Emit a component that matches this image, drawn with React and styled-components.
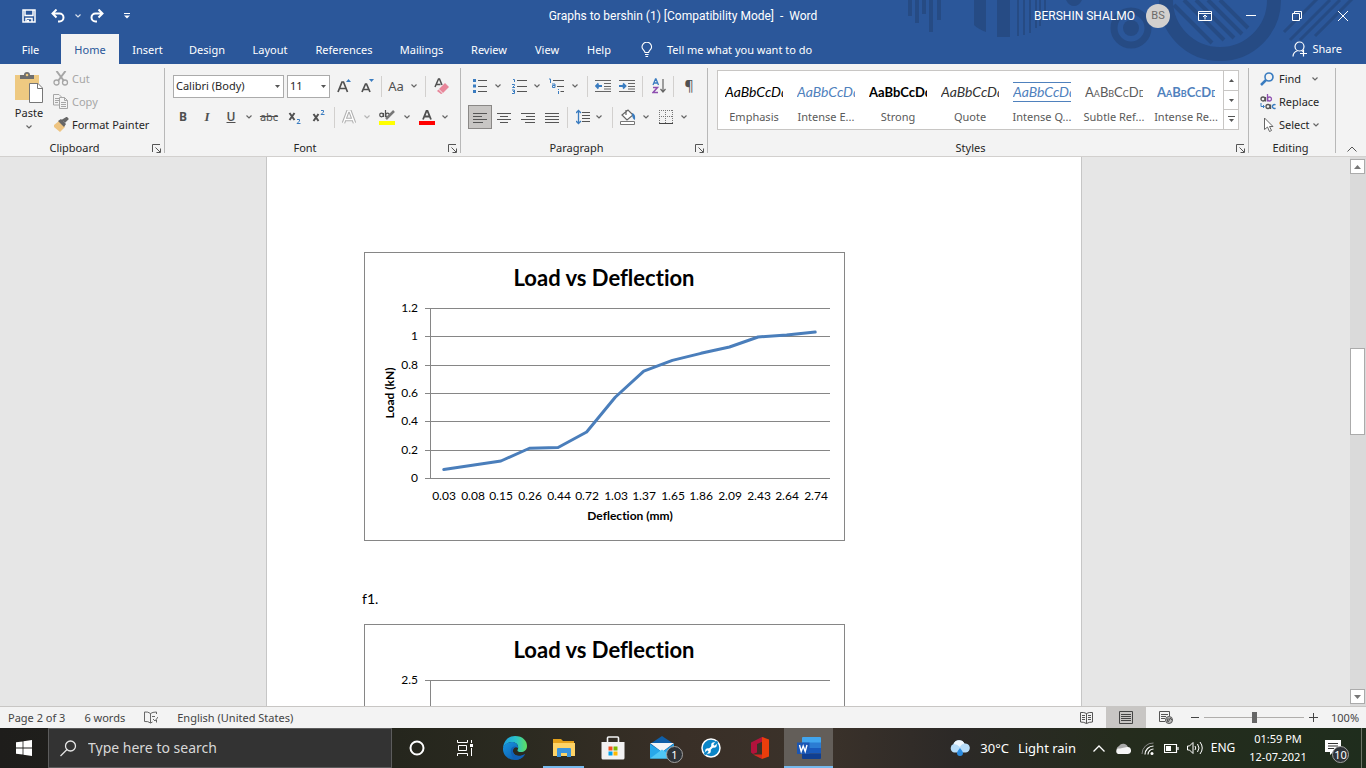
import React from "react";
import styled, { createGlobalStyle } from "styled-components";

const Global = createGlobalStyle`
  *, *::before, *::after { box-sizing: border-box; }
  body { margin: 0; }
  button, select, input { font: inherit; color: inherit; margin: 0; }
  button { padding: 0; border: 0; background: none; cursor: default; }
  svg { display: block; flex: none; }
`;

const ui = `"Noto Sans", "Open Sans", sans-serif`;
const body = `Lato, "Liberation Sans", sans-serif`;
const blue = "#2b579a";

const Window = styled.div`
  display: flex;
  flex-direction: column;
  height: 100vh;
  overflow: hidden;
  background: #e6e6e6;
  color: #262626;
  font: 11px/16px ${ui};
`;

/* ---------- title bar and tabs ---------- */

const Header = styled.header`
  position: relative;
  background: ${blue};
  color: #fff;
`;
const Art = styled.svg`
  position: absolute;
  top: 0;
  right: 0;
`;
const TitleRow = styled.div`
  position: relative;
  display: grid;
  grid-template-columns: 1fr auto 1fr;
  align-items: center;
  height: 32px;
`;
const QuickAccess = styled.div`
  display: flex;
  align-items: center;
  padding-left: 17px;
`;
const Title = styled.h1`
  margin: 0;
  font: 12px/16px Roboto, ${ui};
  white-space: pre;
`;
const Account = styled.div`
  display: flex;
  align-items: center;
  justify-content: flex-end;
  font: 12px/16px Roboto, ${ui};
`;
const Avatar = styled.span`
  width: 24px;
  height: 24px;
  margin: 0 12px 0 11px;
  border-radius: 50%;
  background: #d2d0ce;
  color: #6a6a6a;
  font-size: 11px;
  line-height: 24px;
  text-align: center;
`;
const TabRow = styled.nav`
  position: relative;
  display: flex;
  align-items: flex-end;
  height: 32px;
`;
const Tab = styled.button`
  width: ${(p) => p.$w}px;
  height: 30px;
  padding-top: 2px;
  line-height: 28px;
  color: ${(p) => (p.$active ? blue : "#fff")};
  background: ${(p) => (p.$active ? "#f3f3f3" : "transparent")};
`;
const TellMe = styled.button`
  display: flex;
  align-items: center;
  gap: 14px;
  height: 30px;
  padding: 1px 0 0 16px;
`;
const Share = styled.button`
  display: flex;
  align-items: center;
  gap: 4px;
  height: 30px;
  margin-left: auto;
  padding-right: 24px;
`;

/* ---------- ribbon ---------- */

const Ribbon = styled.section`
  display: flex;
  height: 93px;
  padding-top: 4px;
  background: #f3f3f3;
  border-bottom: 1px solid #d2d0ce;
`;
const GroupBox = styled.div`
  display: flex;
  flex-direction: column;
  width: ${(p) => (p.$w ? p.$w + "px" : "auto")};
  flex: ${(p) => (p.$w ? "none" : "1")};
  height: 85px;
  border-right: 1px solid #b8b8b8;
`;
const GroupBody = styled.div`
  flex: 1;
  padding: ${(p) => p.$pad};
`;
const GroupFoot = styled.div`
  display: flex;
  align-items: center;
  gap: 3px;
  height: 10px;
  padding-right: 3px;
  text-align: center;
`;
const GroupName = styled.span`
  flex: 1;
`;
const Row = styled.div`
  display: flex;
  align-items: center;
  height: 24px;
  margin: 0 0 ${(p) => p.$mb || 0}px ${(p) => p.$ml || 0}px;
`;
const Tool = styled.button`
  display: flex;
  align-items: center;
  justify-content: center;
  flex: none;
  width: ${(p) => p.$w || 24}px;
  height: ${(p) => p.$h || 24}px;
  color: #505050;
  font: ${(p) => p.$font || `12px/16px ${ui}`};
  background: ${(p) => (p.$on ? "#c8c6c4" : "transparent")};
  border: ${(p) => (p.$on ? "1px solid #8a8886" : "0")};
`;
const Rule = styled.span`
  width: 1px;
  height: 21px;
  margin: 0 ${(p) => p.$r}px 0 ${(p) => p.$l}px;
  background: #d2d0ce;
`;
const Command = styled.button`
  display: flex;
  align-items: center;
  gap: 3px;
  height: 23px;
  padding-bottom: 2px;
  color: ${(p) => (p.disabled ? "#a6a6a6" : "#262626")};
  white-space: nowrap;
`;
const Clipboard = styled.div`
  display: flex;
  gap: 9px;
`;
const Paste = styled.button`
  display: flex;
  flex-direction: column;
  align-items: center;
  gap: 2px;
  width: 30px;
  height: 70px;
  padding-top: 4px;
`;
const Combo = styled.div`
  position: relative;
  width: ${(p) => p.$w}px;
  height: 23px;
  margin-right: 3px;
  svg { position: absolute; right: 4px; top: 10px; pointer-events: none; }
  select {
    width: 100%;
    height: 100%;
    padding: 0 2px;
    appearance: none;
    background: #fff;
    border: 1px solid #ababab;
    border-radius: 0;
    color: #262626;
    font-size: 11px;
  }
`;
const Gallery = styled.div`
  display: flex;
  height: 60px;
  background: #fff;
  border: 1px solid #c8c6c4;
`;
const StyleList = styled.div`
  display: flex;
  flex: 1;
`;
const StyleItem = styled.button`
  display: flex;
  flex-direction: column;
  align-items: center;
  width: 72px;
  padding-top: 11px;
  color: #5a5a5a;
`;
const Preview = styled.span`
  width: 58px;
  height: 20px;
  margin-bottom: 7px;
  overflow: hidden;
  text-align: left;
  white-space: nowrap;
  font-family: ${body};
  font-size: ${(p) => (p.$bold || p.$caps ? 13 : 14)}px;
  line-height: 18px;
  font-style: ${(p) => (p.$italic ? "italic" : "normal")};
  font-weight: ${(p) => (p.$bold ? 700 : 400)};
  font-variant: ${(p) => (p.$caps ? "small-caps" : "normal")};
  color: ${(p) => p.$color};
  border: solid ${(p) => (p.$lines ? p.$color : "transparent")};
  border-width: 1px 0;
`;
const Scrolls = styled.div`
  display: flex;
  flex-direction: column;
  width: 15px;
  border-left: 1px solid #c8c6c4;
  button {
    display: flex;
    align-items: center;
    justify-content: center;
    flex: 1;
    width: 14px;
  }
  button + button { border-top: 1px solid #c8c6c4; }
`;
const Collapse = styled.button`
  align-self: flex-end;
  display: flex;
  justify-content: center;
  width: 30px;
  padding: 0 0 4px 2px;
`;

/* ---------- document ---------- */

const Workspace = styled.main`
  display: flex;
  flex: 1;
  min-height: 0;
`;
const Canvas = styled.div`
  display: flex;
  justify-content: center;
  flex: 1;
  padding-right: 2px;
  overflow: hidden;
`;
const Page = styled.article`
  flex: none;
  width: 816px;
  padding: 95px 95px 0;
  background: #fff;
  border: solid #c6c6c6;
  border-width: 0 1px;
  color: #000;
`;
const Figure = styled.figure`
  margin: 0 0 0 2px;
  width: 481px;
  border: 1px solid #868686;
`;
const Para = styled.p`
  margin: 48px 0 15px;
  font: 14px/20px ${body};
`;
const ChartText = styled.text`
  font-family: ${body};
  font-size: ${(p) => p.$size || 12}px;
  font-weight: ${(p) => (p.$bold ? 700 : 400)};
  font-variant-ligatures: none;
  text-anchor: ${(p) => p.$anchor || "middle"};
`;
const ScrollTrack = styled.div`
  display: flex;
  flex-direction: column;
  width: 16px;
  padding: 2px 1px 2px 0;
  background: #dadada;
`;
const ScrollButton = styled.button`
  display: flex;
  align-items: center;
  justify-content: center;
  height: 15px;
  background: #fff;
  border: 1px solid #ababab;
`;
const ScrollThumb = styled.div`
  height: 87px;
  background: #fff;
  border: 1px solid #ababab;
`;
const Space = styled.div`
  flex: ${(p) => p.$n};
`;

/* ---------- status bar ---------- */

const StatusBar = styled.footer`
  display: flex;
  align-items: center;
  justify-content: space-between;
  height: 22px;
  padding: 0 8px;
  background: #f3f3f3;
  border-top: 1px solid #c8c6c4;
  color: #444;
`;
const StatusSide = styled.div`
  display: flex;
  align-items: center;
  height: 21px;
  gap: ${(p) => p.$gap || 0}px;
`;
const ViewButton = styled.button`
  display: flex;
  align-items: center;
  justify-content: center;
  width: 40px;
  height: 21px;
  background: ${(p) => (p.$on ? "#c8c6c4" : "transparent")};
`;
const ZoomRange = styled.input`
  appearance: none;
  width: 100px;
  height: 11px;
  background: linear-gradient(#b0aeac, #b0aeac) center / 100% 1px no-repeat;
  &::-webkit-slider-thumb {
    appearance: none;
    width: 5px;
    height: 11px;
    background: #666;
  }
`;
const Percent = styled.span`
  width: 36px;
  padding-left: 9px;
`;

/* ---------- taskbar ---------- */

const Taskbar = styled.footer`
  display: flex;
  height: 40px;
  color: #fff;
  background: linear-gradient(90deg, #1e1d1b 0, #25261d 29%, #2b2a20 38%, #392f27 50%, #3b322a 60%, #2c2927 70%, #252c1d 82%, #1f2d1d 100%);
`;
const Start = styled.button`
  display: flex;
  align-items: center;
  justify-content: center;
  width: 48px;
`;
const Search = styled.label`
  display: flex;
  align-items: center;
  gap: 11px;
  width: 344px;
  padding-left: 11px;
  background: #333;
  border: 1px solid #5c5c5c;
  input {
    flex: 1;
    min-width: 0;
    padding: 0;
    border: 0;
    outline: 0;
    background: none;
    font-size: 14px;
    &::placeholder { color: #d8d8d8; opacity: 1; }
  }
`;
const TaskButton = styled.button`
  position: relative;
  display: flex;
  align-items: center;
  justify-content: center;
  width: 49px;
  height: 40px;
  background: ${(p) => (p.$active ? "#635e59" : "transparent")};
  &::after {
    content: "";
    position: absolute;
    bottom: 0;
    left: ${(p) => (p.$active ? 0 : 4)}px;
    right: ${(p) => (p.$active ? 0 : 4)}px;
    height: 2px;
    background: ${(p) => (p.$open ? "#76b9ed" : "transparent")};
  }
`;
const Tray = styled.div`
  display: flex;
  align-items: center;
  margin-left: auto;
`;
const Weather = styled.button`
  display: flex;
  align-items: center;
  gap: 9px;
  margin-right: 11px;
  font-size: 13px;
`;
const TrayButton = styled.button`
  display: flex;
  align-items: center;
  justify-content: center;
  width: ${(p) => p.$w || 24}px;
  height: 40px;
  font-size: 12px;
`;
const Clock = styled.time`
  width: 78px;
  font-size: 11px;
  line-height: 18px;
  text-align: center;
`;
const Notify = styled.button`
  position: relative;
  display: flex;
  align-items: center;
  justify-content: center;
  width: 44px;
  height: 40px;
  padding: 0 12px 2px 0;
`;
const Count = styled.span`
  position: absolute;
  right: ${(p) => p.$r}px;
  bottom: 5px;
  width: 17px;
  height: 17px;
  border-radius: 50%;
  border: 1px solid #a0a0a0;
  background: #2f3338;
  font-size: 11px;
  line-height: 15px;
  text-align: center;
`;
const Desktop = styled.button`
  width: 5px;
  height: 40px;
  border-left: 1px solid #6d7568;
`;

/* ---------- icons ---------- */

const Icon = ({ w = 16, h = 16, children, ...rest }) => (
  <svg width={w} height={h} viewBox={`0 0 ${w} ${h}`} fill="none" aria-hidden="true" {...rest}>
    {children}
  </svg>
);
const Chevron = ({ c = "#666" }) => (
  <Icon w={6} h={4}><path d="M.5.5 3 3 5.500.5" stroke={c} strokeWidth="1.200" /></Icon>
);
const Triangle = ({ up, c = "#555", w = 5, h = 3 }) => (
  <Icon w={w} h={h}><path d={up ? `M0 ${h}H${w}L${w / 2} 0Z` : `M0 0H${w}L${w / 2} ${h}Z`} fill={c} /></Icon>
);
const Launcher = () => (
  <Icon w={9} h={9}>
    <path d="M.5 8V.5H8M3.500 3.500 8 8M8.500 4.500V8.500H4.500" stroke="#555" />
  </Icon>
);
const Lines = ({ rows }) => (
  <Icon w={14} h={11}>
    {rows.map(([a, b], i) => (
      <path key={i} d={`M${a} ${i * 3 + 1.5}H${b}`} stroke="#555" />
    ))}
  </Icon>
);
const DropTool = ({ w = 12, c, label }) => (
  <Tool $w={w} aria-label={label}><Chevron c={c} /></Tool>
);

const HeaderArt = () => (
  <Art width="466" height="64" viewBox="0 0 466 64" aria-hidden="true">
    <g fill="#264b84">
      <path d="M8 0h4v16H8zM15 0h4v23h-4zM22 0h4v14h-4zM29 0h4v32h-4zM37 0h4v20h-4z" />
      <path d="M74 0h12v32q-8-3-12-7zM97 0h13v37H97zM117 0h2v36h-2zM123 0h2v35h-2zM129 0h2v33h-2zM135 0h2v28h-2zM139 0h2v26h-2zM144 0h2v15h-2z" />
      <path d="M166 0h16q-3 6-8 6t-8-6z" />
      <circle cx="231" cy="28" r="8" />
    </g>
    <g fill="none" stroke="#264b84">
      <circle cx="231" cy="28" r="17" strokeWidth="7" />
      <circle cx="320" cy="0" r="54" strokeWidth="14" />
      <path d="m274 5 38 38M284 0l40 40M296 0l38 38M308 0l34 34M320 0l28 28" strokeWidth="4" />
      <path d="m390 40 40-40M400 40l40-40M415 36l38-38M384 32l34-34" strokeWidth="3" />
    </g>
  </Art>
);

/* ---------- chart ---------- */

function Chart({ title, ticks, top, step, points = [], xTitle, yTitle }) {
  const left = 65;
  const right = 465;
  const cat = 400 / 14;
  const base = 225;
  const max = ticks[0];
  const x = (i) => left + cat * (i + 0.5);
  const y = (v) => base - (v / max) * (base - top);
  return (
    <Figure>
      <svg width="479" height="287" viewBox="0 0 479 287" role="img" aria-label={title}>
        <ChartText x="239" y="33" $size={22} $bold>{title}</ChartText>
        <g stroke="#868686" shapeRendering="crispEdges">
          {ticks.map((t, i) => (
            <path key={t} d={`M${left - 5} ${Math.round(top + i * step) + 0.5}H${right}`} />
          ))}
          <path d={`M${left + 0.5} ${top}V${base}`} />
        </g>
        {ticks.map((t, i) => (
          <ChartText key={t} x="53" y={Math.round(top + i * step) + 4} $anchor="end">{t}</ChartText>
        ))}
        {points.length > 0 && (
          <polyline
            points={points.map((p, i) => `${x(i) - 0.5},${y(p[1])}`).join(" ")}
            fill="none" stroke="#4a7ebb" strokeWidth="3" strokeLinejoin="round" strokeLinecap="round"
          />
        )}
        {points.map((p, i) => (
          <ChartText key={p[0]} x={Math.round(x(i))} y="247">{p[0]}</ChartText>
        ))}
        {xTitle && <ChartText x="265" y="267" $bold>{xTitle}</ChartText>}
        {yTitle && <ChartText transform="translate(29 140) rotate(-90)" $bold>{yTitle}</ChartText>}
      </svg>
    </Figure>
  );
}

const loads = [
  ["0.03", 0.06], ["0.08", 0.09], ["0.15", 0.12], ["0.26", 0.21], ["0.44", 0.215],
  ["0.72", 0.325], ["1.03", 0.57], ["1.37", 0.755], ["1.65", 0.83], ["1.86", 0.88],
  ["2.09", 0.925], ["2.43", 0.995], ["2.64", 1.01], ["2.74", 1.03],
];

const tabs = [
  ["File", 61], ["Home", 58, true], ["Insert", 57], ["Design", 62], ["Layout", 64],
  ["References", 84], ["Mailings", 71], ["Review", 64], ["View", 52], ["Help", 52],
];

const styles = [
  { name: "Emphasis", color: "#000", italic: true },
  { name: "Intense E...", color: "#4f81bd", italic: true },
  { name: "Strong", color: "#000", bold: true },
  { name: "Quote", color: "#333", italic: true },
  { name: "Intense Q...", color: "#4f81bd", italic: true, lines: true },
  { name: "Subtle Ref...", color: "#5a5a5a", caps: true },
  { name: "Intense Re...", color: "#4f81bd", caps: true, bold: true },
];

function Group({ name, w, pad, launch = true, children }) {
  return (
    <GroupBox $w={w}>
      <GroupBody $pad={pad}>{children}</GroupBody>
      <GroupFoot>
        <GroupName>{name}</GroupName>
        {launch && <button aria-label={`${name} settings`}><Launcher /></button>}
      </GroupFoot>
    </GroupBox>
  );
}

export default function App() {
  return (
    <Window>
      <Global />
      <Header>
        <HeaderArt />
        <TitleRow>
          <QuickAccess>
            <Tool aria-label="Save">
              <Icon w={14} h={14}>
                <path d="M1 1h12v12H1zM3 1v5.500h8V1M4 13v-3.500h6V13" stroke="#fff" strokeWidth="1.500" />
                <path d="M5 11h2v2H5z" fill="#fff" />
              </Icon>
            </Tool>
            <Tool $w={34} aria-label="Undo">
              <Icon w={14} h={14}>
                <path d="M5.500.5 1.500 4.500l4 4M2 4.500h6.500a4 4 0 0 1 0 8H7" stroke="#fff" strokeWidth="2" />
              </Icon>
            </Tool>
            <DropTool w={6} c="#d6deea" label="Undo list" />
            <Tool $w={32} aria-label="Redo">
              <Icon w={14} h={14}>
                <path d="m8.500.5 4 4-4 4M12 4.500H5.500a4 4 0 0 0 0 8H7" stroke="#fff" strokeWidth="2" />
              </Icon>
            </Tool>
            <Tool $w={28} aria-label="Customise">
              <Icon w={6} h={6}><path d="M0 .5h6" stroke="#fff" /><path d="M0 2.500h6L3 5.500z" fill="#fff" /></Icon>
            </Tool>
          </QuickAccess>
          <Title>{"Graphs to bershin (1) [Compatibility Mode]  -  Word"}</Title>
          <Account>
            <span>BERSHIN SHALMO</span>
            <Avatar>BS</Avatar>
            <Tool $w={46} aria-label="Ribbon display options">
              <Icon w={14} h={12}>
                <path d="M.5 1.500h13v9H.5zM.5 3.500h13M7 9.500V5.500M5 7l2-2 2 2" stroke="#fff" />
              </Icon>
            </Tool>
            <Tool $w={46} aria-label="Minimise"><Icon w={10} h={2}><path d="M0 .5h10" stroke="#fff" /></Icon></Tool>
            <Tool $w={46} aria-label="Restore">
              <Icon w={10} h={10}><path d="M.5 2.500h7v7h-7zM2.500 2.500v-2h7v7h-2" stroke="#fff" /></Icon>
            </Tool>
            <Tool $w={46} aria-label="Close"><Icon w={10} h={10}><path d="m0 0 10 10M10 0 0 10" stroke="#fff" /></Icon></Tool>
          </Account>
        </TitleRow>
        <TabRow>
          {tabs.map(([name, w, active]) => <Tab key={name} $w={w} $active={active}>{name}</Tab>)}
          <TellMe>
            <Icon w={12} h={15}>
              <path d="M4 10.500c0-2-3-3-3-5.500a4.800 4.800 0 0 1 9.600 0c0 2.500-3 3.500-3 5.500zM4 12.500h3.600M4.500 14.500h2.600" stroke="#fff" strokeWidth="1.100" />
            </Icon>
            Tell me what you want to do
          </TellMe>
          <Share>
            <Icon w={16} h={16}>
              <circle cx="7.500" cy="5.500" r="4.500" stroke="#fff" strokeWidth="1.200" />
              <path d="M1 15.500c0-3 2-5 4.500-5.800M9.500 9.500l1.500 1M11.500 8.500v7M8 12.500h7" stroke="#fff" strokeWidth="1.200" />
            </Icon>
            Share
          </Share>
        </TabRow>
      </Header>

      <Ribbon>
        <Group name="Clipboard" w={165} pad="0 0 0 14px">
          <Clipboard>
            <Paste>
              <Icon w={28} h={31}>
                <path d="M0 3h24v25H0z" fill="#eec981" />
                <path d="M5 3h4a3 3 0 0 1 6 0h4v4H5z" fill="#6e6e6e" />
                <circle cx="12" cy="3" r="1.300" fill="#eec981" />
                <path d="M14.500 11.500H23l4.500 4.500v14.500h-13z" fill="#fff" stroke="#777" />
                <path d="M22.500 11.500v5h5" stroke="#777" />
              </Icon>
              <span>Paste</span>
              <Tool $w={10} $h={8} as="span"><Chevron /></Tool>
            </Paste>
            <div>
              <Command disabled>
                <Icon w={16} h={15}>
                  <path d="M3.500 0 11 10M12.500 0 5 10" stroke="#a6a6a6" strokeWidth="2" />
                  <circle cx="3.500" cy="11.500" r="2.500" stroke="#a6a6a6" strokeWidth="1.300" />
                  <circle cx="12" cy="11.500" r="2.500" stroke="#a6a6a6" strokeWidth="1.300" />
                </Icon>
                Cut
              </Command>
              <Command disabled>
                <Icon w={16} h={15}>
                  <path d="M.5.5H6l2.500 2.500v8H.5zM2 4.500h4M2 6.500h4M2 8.500h3" stroke="#a6a6a6" />
                  <path d="M6.500 3.500h5l3 3v8h-8z" fill="#f3f3f3" stroke="#a6a6a6" />
                  <path d="M11.500 3.500v3h3M8 8.500h5M8 10.500h5M8 12.500h5" stroke="#a6a6a6" />
                </Icon>
                Copy
              </Command>
              <Command>
                <Icon w={16} h={15}>
                  <path d="m1 8 5-4 6 6-5 5-6-5z" fill="#eec481" />
                  <path d="m5 4 3-2 5 5-2 3z" fill="#666" />
                  <path d="m9 4 5-3M11 5l4-4" stroke="#666" strokeWidth="2.500" />
                </Icon>
                Format Painter
              </Command>
            </div>
          </Clipboard>
        </Group>

        <Group name="Font" w={296} pad="6px 0 0 6px">
          <Row $mb={7} $ml={2}>
            <Combo $w={111}>
              <select aria-label="Font"><option>Calibri (Body)</option></select>
              <Triangle />
            </Combo>
            <Combo $w={43}>
              <select aria-label="Font size"><option>11</option></select>
              <Triangle />
            </Combo>
            <Tool aria-label="Grow font" $w={22}>
              <Icon w={14} h={16}>
                <path d="M1 14 5 4h1.500l4 10M2.500 10.500h6.500" stroke="#505050" strokeWidth="1.700" />
                <path d="M9 4h5l-2.500-3z" fill="#3a7cc0" />
              </Icon>
            </Tool>
            <Tool aria-label="Shrink font">
              <Icon w={14} h={16}>
                <path d="M2 14 5.500 6h1L10 14M3.500 11.500h5" stroke="#505050" strokeWidth="1.700" />
                <path d="M9 1h5l-2.500 3z" fill="#3a7cc0" />
              </Icon>
            </Tool>
            <Rule $l={2} $r={2} />
            <Tool aria-label="Change case" $font={`13px/16px ${ui}`}>Aa</Tool>
            <DropTool label="Case options" />
            <Rule $l={5} $r={5} />
            <Tool aria-label="Clear formatting" $w={22}>
              <Icon w={16} h={16}>
                <path d="M1 9 4.500 1h1L8 7M2.500 6.500h4" stroke="#505050" strokeWidth="1.500" />
                <path d="m5 11 6-6 4 4-6 6z" fill="#e8869a" />
                <path d="m3 13 1.500-1.500 4 4L7 16z" fill="#e8869a" />
              </Icon>
            </Tool>
          </Row>
          <Row>
            <Tool $font={`700 12px/16px ${ui}`}>B</Tool>
            <Tool $font={`italic 700 13px/16px "Liberation Serif", serif`}>I</Tool>
            <Tool $font={`600 12px/16px ${ui}`}><u>U</u></Tool>
            <DropTool label="Underline styles" />
            <Tool $w={28} $font={`11px/16px ${ui}`}><s>abc</s></Tool>
            <Tool aria-label="Subscript">
              <Icon w={14} h={14}>
                <path d="m1.500 3 5 7M6.500 3l-5 7" stroke="#505050" strokeWidth="2" />
                <path d="M9 9.500h2.500v1.500L9 13.500h3.500" stroke="#3a7cc0" />
              </Icon>
            </Tool>
            <Tool aria-label="Superscript">
              <Icon w={14} h={14}>
                <path d="m1.500 4 5 7M6.500 4l-5 7" stroke="#505050" strokeWidth="2" />
                <path d="M9 .5h2.500V2L9 4.500h3.500" stroke="#3a7cc0" />
              </Icon>
            </Tool>
            <Rule $l={3} $r={2} />
            <Tool aria-label="Text effects">
              <Icon w={14} h={14}>
                <path d="M1.500 13 6 1h2l4.500 12M3.500 9.500h7" stroke="#b0b0b0" strokeWidth="3.500" />
                <path d="M1.500 13 6 1h2l4.500 12M3.500 9.500h7" stroke="#fff" strokeWidth="1.300" />
              </Icon>
            </Tool>
            <DropTool c="#b5b5b5" label="Effects list" />
            <Tool $w={28} aria-label="Highlight">
              <Icon w={16} h={16}>
                <circle cx="2.500" cy="6" r="1.800" stroke="#505050" strokeWidth="1.200" />
                <path d="M4.500 4v4M6.500 1v7" stroke="#505050" strokeWidth="1.200" />
                <circle cx="8.500" cy="6" r="1.800" stroke="#505050" strokeWidth="1.200" />
                <path d="m15 2-8 8" stroke="#777" strokeWidth="2.500" />
                <path d="M0 12h16v4H0z" fill="#ff0" />
              </Icon>
            </Tool>
            <DropTool label="Highlight colors" />
            <Tool $w={28} aria-label="Font color">
              <Icon w={16} h={16}>
                <path d="M4 10.500 7.500 2h1l3.500 8.500M5 7.500h6" stroke="#505050" strokeWidth="1.800" />
                <path d="M0 12h16v4H0z" fill="#f00" />
              </Icon>
            </Tool>
            <DropTool w={8} label="Font colors" />
          </Row>
        </Group>

        <Group name="Paragraph" w={247} pad="6px 0 0 7px">
          <Row $mb={7}>
            <Tool aria-label="Bullets">
              <Icon w={14} h={14}>
                <path d="M0 0h3v3H0zM0 5.500h3v3H0zM0 11h3v3H0z" fill="#3a7cc0" />
                <path d="M5 1.500h9M5 7.500h9M5 12.500h9" stroke="#555" />
              </Icon>
            </Tool>
            <DropTool label="Bullet styles" />
            <Tool $w={30} aria-label="Numbering">
              <Icon w={15} h={16}>
                <path d="M1 1.500h1.500V4M0 6.500h2.500v1L.5 9.500H3M0 12h2.500v3.500H0M1 13.500h1" stroke="#3a7cc0" />
                <path d="M5 2.500h10M5 8.500h10M5 13.500h10" stroke="#555" />
              </Icon>
            </Tool>
            <Tool $w={6} aria-label="Number styles"><Chevron /></Tool>
            <Tool $w={31} aria-label="Multilevel list">
              <Icon w={16} h={16}>
                <path d="M1 1h1.500v4M4 6h3v3.500H4.500V7.500H7M10.500 11v1M10.500 13v3" stroke="#3a7cc0" />
                <path d="M5 2.500h11M9 8.500h7M12.500 13.500H16" stroke="#555" />
              </Icon>
            </Tool>
            <DropTool w={8} label="List levels" />
            <Rule $l={8} $r={3} />
            {[true, false].map((out) => (
              <Tool key={String(out)} aria-label={out ? "Decrease indent" : "Increase indent"}>
                <Icon w={16} h={12}>
                  <path d="M0 .5h16M9 3.500h7M9 6.500h7M9 9h7M0 11.500h16" stroke="#666" />
                  <path d={out ? "M7 6H1M3.500 3.500 1 6l2.500 2.500" : "M0 6h6M4 3.500 6.500 6 4 8.500"} stroke="#3a7cc0" strokeWidth="1.800" />
                </Icon>
              </Tool>
            ))}
            <Rule $l={3} $r={4} />
            <Tool aria-label="Sort">
              <Icon w={14} h={16}>
                <path d="M1 7 3.500 1h.5l2.500 6M2 5h4" stroke="#3a7cc0" strokeWidth="1.300" />
                <path d="M1 9.500h4.500L1 14.500h5" stroke="#8e4fb0" strokeWidth="1.500" />
                <path d="M11 1v13M8.500 11l2.500 3 2.500-3" stroke="#666" strokeWidth="1.200" />
              </Icon>
            </Tool>
            <Rule $l={2} $r={3} />
            <Tool $font={`14px/16px ${ui}`}>¶</Tool>
          </Row>
          <Row>
            <Tool $on aria-label="Align left"><Lines rows={[[0, 14], [0, 9], [0, 14], [0, 10]]} /></Tool>
            <Tool aria-label="Centre"><Lines rows={[[0, 14], [3, 11], [0, 14], [3, 11]]} /></Tool>
            <Tool aria-label="Align right"><Lines rows={[[0, 14], [5, 14], [0, 14], [4, 14]]} /></Tool>
            <Tool aria-label="Justify"><Lines rows={[[0, 14], [0, 14], [0, 14], [0, 14]]} /></Tool>
            <Rule $l={3} $r={3} />
            <Tool aria-label="Line spacing">
              <Icon w={14} h={16}>
                <path d="M2.500 1v14M0 4l2.500-2.500L5 4M0 12l2.500 2.500L5 12" stroke="#3a7cc0" strokeWidth="1.300" />
                <path d="M6 3.500h8M6 6.500h8M6 9.500h8M6 12.500h8" stroke="#555" />
              </Icon>
            </Tool>
            <DropTool w={8} label="Spacing options" />
            <Rule $l={9} $r={3} />
            <Tool aria-label="Shading">
              <Icon w={17} h={16}>
                <path d="m2 6 6-5 5 5-6 5zM6 1v5" stroke="#666" strokeWidth="1.200" fill="#fff" />
                <path d="M12 4q4 1 3 7-3-1-3-7z" fill="#3a7cc0" />
                <path d="M.5 12.500h14v3H.5z" fill="#fff" stroke="#777" />
              </Icon>
            </Tool>
            <DropTool label="Shading colors" />
            <Tool $w={28} aria-label="Borders">
              <Icon w={14} h={14}>
                <path d="M.5 0v13M13.500 0v13M6.500 0v13M0 .5h14M0 6.500h14" stroke="#777" strokeDasharray="1 1" />
                <path d="M0 13.500h14" stroke="#444" />
              </Icon>
            </Tool>
            <DropTool w={8} label="Border styles" />
          </Row>
        </Group>

        <Group name="Styles" pad="2px 9px 0 9px">
          <Gallery>
            <StyleList>
              {styles.map((s) => (
                <StyleItem key={s.name}>
                  <Preview $color={s.color} $italic={s.italic} $bold={s.bold} $caps={s.caps} $lines={s.lines}>
                    {s.caps ? "AaBbCcDdE" : "AaBbCcDd"}
                  </Preview>
                  {s.name}
                </StyleItem>
              ))}
            </StyleList>
            <Scrolls>
              <button aria-label="Previous styles"><Triangle up /></button>
              <button aria-label="Next styles"><Triangle /></button>
              <button aria-label="All styles">
                <Icon w={7} h={7}><path d="M0 .5h7" stroke="#555" /><path d="M1 3h5L3.500 6z" fill="#555" /></Icon>
              </button>
            </Scrolls>
          </Gallery>
        </Group>

        <Group name="Editing" w={87} pad="0 0 0 11px" launch={false}>
          <Command>
            <Icon w={16} h={14}>
              <circle cx="9" cy="5" r="4" stroke="#3a7cc0" strokeWidth="1.600" />
              <path d="m6 8-5 5" stroke="#3a7cc0" strokeWidth="2.500" />
            </Icon>
            Find
            <Tool as="span" $w={22}><Chevron /></Tool>
          </Command>
          <Command>
            <Icon w={16} h={16}>
              <circle cx="3" cy="5" r="2" stroke="#555" strokeWidth="1.300" />
              <path d="M5.500 3v4.500" stroke="#555" strokeWidth="1.300" />
              <path d="M7.500 0v7.500" stroke="#8e4fb0" strokeWidth="1.300" />
              <circle cx="9.500" cy="5" r="2" stroke="#8e4fb0" strokeWidth="1.300" />
              <path d="M1 9v3.500h3M3 11l1.500 1.500L3 14" stroke="#3a7cc0" />
              <circle cx="8" cy="12.500" r="2" stroke="#555" strokeWidth="1.300" />
              <path d="M10.500 10.500V15" stroke="#555" strokeWidth="1.300" />
              <path d="M15.500 10.800a2 2 0 1 0 0 3.400" stroke="#3a7cc0" strokeWidth="1.400" />
            </Icon>
            Replace
          </Command>
          <Command>
            <Icon w={16} h={16}>
              <path d="M4.500 1v11.500l3-2.500 2 4.500 2-1-2-4h3.500z" fill="#fff" stroke="#666" />
            </Icon>
            Select
            <Chevron />
          </Command>
        </Group>
        <Collapse aria-label="Collapse ribbon">
          <Icon w={10} h={6}><path d="m.5 5.500 4.500-4.500 4.500 4.500" stroke="#555" /></Icon>
        </Collapse>
      </Ribbon>

      <Workspace>
        <Canvas>
          <Page>
            <Chart
              title="Load vs Deflection"
              ticks={["1.2", "1", "0.8", "0.6", "0.4", "0.2", "0"]}
              top={55} step={28.333} points={loads}
              xTitle="Deflection (mm)" yTitle="Load (kN)"
            />
            <Para>f1.</Para>
            <Chart title="Load vs Deflection" ticks={["2.5"]} top={55} step={34} />
          </Page>
        </Canvas>
        <ScrollTrack>
          <ScrollButton aria-label="Scroll up"><Triangle up w={7} h={4} c="#777" /></ScrollButton>
          <Space $n={174} />
          <ScrollThumb />
          <Space $n={255} />
          <ScrollButton aria-label="Scroll down"><Triangle w={7} h={4} c="#777" /></ScrollButton>
        </ScrollTrack>
      </Workspace>

      <StatusBar>
        <StatusSide $gap={19}>
          <span>Page 2 of 3</span>
          <span>6 words</span>
          <Icon w={14} h={13}>
            <path d="M6.500 2.500Q4 .5.500 1v9.500q3.500-.5 6 1.500zM6.500 2.500q2-1.500 6-1.500v2M6.500 12l2-1M8 5.500h3M9 8l2 2 3-4M12.500 9v2.500" stroke="#666" />
          </Icon>
          <span>English (United States)</span>
        </StatusSide>
        <StatusSide>
          <ViewButton aria-label="Read mode">
            <Icon w={13} h={12}>
              <path d="M6.500 1.500v10M6.500 1.500Q4 0 .5.500v9.500q3.500 0 6 1.500Q9 10 12.500 10V.5Q9 0 6.500 1.500M2 3.500h3M2 5.500h3M2 7.500h3M8 3.500h3M8 5.500h3M8 7.500h3" stroke="#555" />
            </Icon>
          </ViewButton>
          <ViewButton $on aria-label="Print layout">
            <Icon w={14} h={13}><path d="M.5.5h13v12H.5zM2 3.500h10M2 5.500h10M2 7.500h10M2 9.500h10" stroke="#444" /></Icon>
          </ViewButton>
          <ViewButton aria-label="Web layout">
            <Icon w={14} h={13}>
              <path d="M6 10.500H.5V.5h10V5M2 3.500h7M2 5.500h5M2 7.500h4" stroke="#555" />
              <circle cx="10" cy="9" r="3.500" fill="#bbb" stroke="#555" />
              <path d="M8 8h3l-2 3zM11 7l2 2" stroke="#555" />
            </Icon>
          </ViewButton>
          <Tool $w={18} $h={20} aria-label="Zoom out"><Icon w={8} h={2}><path d="M0 .5h8" stroke="#444" /></Icon></Tool>
          <ZoomRange type="range" aria-label="Zoom" min="10" max="190" defaultValue="100" />
          <Tool $w={18} $h={20} aria-label="Zoom in"><Icon w={9} h={9}><path d="M0 4.500h9M4.500 0v9" stroke="#444" /></Icon></Tool>
          <Percent>100%</Percent>
        </StatusSide>
      </StatusBar>

      <Taskbar>
        <Start aria-label="Start">
          <Icon w={16} h={16}>
            <path d="M0 2.300 6.600 1.400v6.200H0zM7.400 1.300 16 0v7.600H7.400zM0 8.400h6.600v6.200L0 13.700zM7.400 8.400H16V16l-8.600-1.300z" fill="#fff" />
          </Icon>
        </Start>
        <Search>
          <Icon w={17} h={17}>
            <circle cx="10.500" cy="6" r="5" stroke="#e6e6e6" strokeWidth="1.300" />
            <path d="m7 9.500-6.500 6.500" stroke="#e6e6e6" strokeWidth="1.300" />
          </Icon>
          <input type="text" aria-label="Search" placeholder="Type here to search" />
        </Search>
        <TaskButton aria-label="Cortana"><Icon w={16} h={16}><circle cx="8" cy="8" r="6.500" stroke="#fff" strokeWidth="2" /></Icon></TaskButton>
        <TaskButton aria-label="Task view">
          <Icon w={17} h={16}>
            <path d="M.5 0v2.500h10V0M.5 16v-2.500h10V16M1.500 5.500h8v5h-8zM14.500 0v3M14.500 8v8" stroke="#fff" />
            <path d="M13 4h3v3h-3z" fill="#fff" />
          </Icon>
        </TaskButton>
        <TaskButton aria-label="Edge">
          <Icon w={24} h={24}>
            <defs>
              <linearGradient id="edgeTop" x1="0" y1="0" x2="1" y2="0"><stop stopColor="#1b9de2" /><stop offset=".55" stopColor="#2bc3c8" /><stop offset="1" stopColor="#5fe05e" /></linearGradient>
              <linearGradient id="edgeBase" x1="0" y1="0" x2="1" y2="1"><stop stopColor="#1796e0" /><stop offset="1" stopColor="#0b4fa5" /></linearGradient>
            </defs>
            <path d="M0 12C1 4 6 0 12 0c8 0 12 5 12 10 0 4-3 6-6 6-4 0-4-1.500-3-3 1-4-2-7-6-7C5 6 2 8 0 12z" fill="url(#edgeTop)" />
            <path d="M0 12C1 8 5 6 9 6c4 0 6.500 3 6 6-3-2-6 1-5 4 1 4 7 6 12 2-2 4-6 6-10 6C5 24-.500 19 0 12z" fill="url(#edgeBase)" />
            <path d="M8 13c-1 6 3 11 7 10.500 3-.5 6-3 7-5.500-5 3-11 2-12-2-.5-3 1-5 3-5-2-1-4 0-5 2z" fill="#1160b5" />
          </Icon>
        </TaskButton>
        <TaskButton $open aria-label="File Explorer">
          <Icon w={22} h={20}>
            <path d="M0 1h8l2 2h11v4H0z" fill="#e4a11b" />
            <path d="M0 5h22v13H0z" fill="#fdd366" />
            <path d="M4 19v-8q0-1 1-1h12q1 0 1 1v8h-4v-4H8v4z" fill="#3b94dc" />
          </Icon>
        </TaskButton>
        <TaskButton aria-label="Store">
          <Icon w={24} h={24}>
            <path d="M6.500 7V2q0-1 1-1h9q1 0 1 1v5" stroke="#f2f2f2" strokeWidth="1.600" />
            <path d="M.5 6h23v16q0 1.500-1.500 1.500H2Q.5 23.500.5 22z" fill="#f2f2f2" />
            <path d="M7.500 10.500h4v4h-4z" fill="#f25022" /><path d="M12.500 10.500h4v4h-4z" fill="#7fba00" />
            <path d="M7.500 15.500h4v4h-4z" fill="#00a4ef" /><path d="M12.500 15.500h4v4h-4z" fill="#ffb900" />
          </Icon>
        </TaskButton>
        <TaskButton aria-label="Mail">
          <Icon w={24} h={24}>
            <path d="M0 8 12 0l12 8v14H0z" fill="#0f5fa8" />
            <path d="M0 7h24l-12 9z" fill="#f4f6f8" />
            <path d="m0 8 12 8 12-8v14.500H0z" fill="#28a8ea" />
            <path d="m0 22.500 12-9 12 9z" fill="#50c7f5" />
          </Icon>
          <Count $r={3}>1</Count>
        </TaskButton>
        <TaskButton aria-label="Support tool">
          <Icon w={20} h={20}>
            <circle cx="10" cy="10" r="9" fill="#0a85c7" stroke="#fff" strokeWidth="1.500" />
            <path d="m7 13 6-6" stroke="#fff" strokeWidth="2.200" />
            <circle cx="13" cy="7" r="2.800" fill="#fff" />
            <circle cx="7" cy="13" r="2.800" fill="#fff" />
            <path d="m13 7 3.500-3.500M7 13l-3.500 3.500" stroke="#0a85c7" strokeWidth="2" />
          </Icon>
        </TaskButton>
        <TaskButton aria-label="Office">
          <Icon w={18} h={22}>
            <path d="M0 5.500 11 0l3 1-1 3-7 3v8.500L2 17l-2-1.500z" fill="#b3123c" />
            <path d="m11 0 7 2.500v17L11 22V4z" fill="#ea3e0c" />
            <path d="M2 17.500h9V22z" fill="#d02a22" />
          </Icon>
        </TaskButton>
        <TaskButton $open $active aria-label="Word">
          <Icon w={24} h={22}>
            <path d="M6 0h17q1 0 1 1v5H5V1q0-1 1-1z" fill="#41a5ee" />
            <path d="M5 5.500h19V11H5z" fill="#2b7cd3" /><path d="M5 11h19v5.500H5z" fill="#185abd" />
            <path d="M5 16.500h19V21q0 1-1 1H6q-1 0-1-1z" fill="#103f91" />
            <path d="M0 5.500h12.500V17H0z" fill="#1a56b4" />
            <path d="m2.500 8 1.700 6.500L6.200 9l2 5.500L10 8" stroke="#fff" strokeWidth="1.400" />
          </Icon>
        </TaskButton>
        <Tray>
          <Weather>
            <Icon w={22} h={16}>
              <path d="M5 12.500a4.500 4.500 0 0 1-.5-8.500 6 6 0 0 1 11-.5 4.500 4.500 0 0 1 1.500 9z" fill="#b7dcf8" />
              <path d="M4.500 4a6 6 0 0 1 11-.5Q12 4 11 7 8 4 4.500 4z" fill="#eef7ff" />
              <path d="M11 8q3 3.500 3 5a3 3 0 0 1-6 0q0-1.500 3-5z" fill="#2a8be0" />
            </Icon>
            <span>30°C</span>
            <span>Light rain</span>
          </Weather>
          <TrayButton aria-label="Hidden icons"><Icon w={12} h={7}><path d="m.5 6.500 5.500-5.500 5.500 5.500" stroke="#fff" strokeWidth="1.300" /></Icon></TrayButton>
          <TrayButton aria-label="OneDrive">
            <Icon w={16} h={11}>
              <path d="M2 8a4 4 0 0 1 2-5 5 5 0 0 1 9 1.500L7 6z" fill="#aaa" />
              <path d="M3 11a3 3 0 0 1 0-5.500h2L12 4a3.500 3.500 0 0 1 1 7z" fill="#f5f5f5" />
            </Icon>
          </TrayButton>
          <TrayButton aria-label="Network">
            <Icon w={13} h={13}>
              <path d="M1 12A11 11 0 0 1 12.500 1" stroke="#888" /><path d="M4 12.500a8.500 8.500 0 0 1 8.500-8.500M7 12.500A5.500 5.500 0 0 1 12.500 7" stroke="#fff" strokeWidth="1.200" />
              <circle cx="11" cy="11.500" r="1.500" fill="#fff" />
            </Icon>
          </TrayButton>
          <TrayButton aria-label="Battery">
            <Icon w={15} h={9}><path d="M.5.5h12v8H.5zM14 3v3" stroke="#fff" strokeWidth="1.200" /><path d="M2 2h5v5H2z" fill="#fff" /></Icon>
          </TrayButton>
          <TrayButton aria-label="Volume">
            <Icon w={16} h={14}>
              <path d="M.5 5h2L6 1.500v11L2.500 9h-2zM8 5q1.500 2 0 4M10.500 3q3 4 0 8M13 1q4.500 6 0 12" stroke="#fff" />
            </Icon>
          </TrayButton>
          <TrayButton $w={32}>ENG</TrayButton>
          <Clock>01:59 PM<br />12-07-2021</Clock>
          <Notify aria-label="Notifications">
            <Icon w={16} h={15}>
              <path d="M0 0h16v12H8l-3 3v-3H0z" fill="#fff" />
              <path d="M3 3.500h10M3 6h10M3 8.500h6" stroke="#333" />
            </Icon>
            <Count $r={12}>10</Count>
          </Notify>
          <Desktop aria-label="Show desktop" />
        </Tray>
      </Taskbar>
    </Window>
  );
}
